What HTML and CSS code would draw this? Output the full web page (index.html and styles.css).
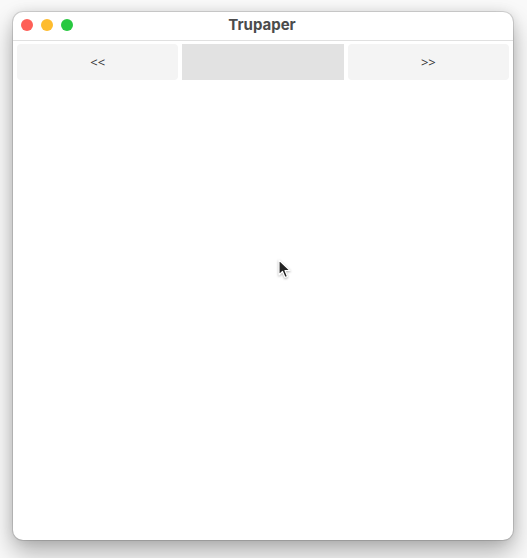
FILE: index.html
```html
<!DOCTYPE html>
<html>
<head>
<meta charset="utf-8">
<link rel="stylesheet" href="styles.css">
</head>
<body>
<div class="window">
  <div class="titlebar">
    <div class="lights">
      <span class="light red"></span>
      <span class="light yellow"></span>
      <span class="light green"></span>
    </div>
    <div class="title">Trupaper</div>
  </div>
  <div class="content">
    <div class="nav">
      <button class="btn">&lt;&lt;</button>
      <button class="btn active"></button>
      <button class="btn">&gt;&gt;</button>
    </div>
  </div>
  <svg class="cursor" width="14" height="20" viewBox="0 0 14 20">
    <path d="M1 1 L1 16 L4.5 12.5 L7 18.5 L9.5 17.5 L7 11.5 L12 11.5 Z" fill="#222" stroke="#fff" stroke-width="1.2" stroke-linejoin="round"/>
  </svg>
</div>
</body>
</html>
```
FILE: styles.css
```css
html, body {
  margin: 0;
  padding: 0;
  background: #f9f9f9;
  width: 527px;
  height: 558px;
  overflow: hidden;
}
body {
  padding: 12px 0 0 13px;
  box-sizing: border-box;
  font-family: Inter, "Liberation Sans", sans-serif;
}
.window {
  position: relative;
  width: 500px;
  height: 528px;
  background: #fff;
  border-radius: 10px;
  box-shadow: 0 0 0 1px rgba(0,0,0,0.12), 0 12px 24px rgba(0,0,0,0.3), 0 0 12px rgba(0,0,0,0.1);
  overflow: hidden;
}
.titlebar {
  position: relative;
  height: 28px;
  border-bottom: 1px solid #e0e0e0;
  display: flex;
  align-items: center;
  justify-content: center;
}
.lights {
  position: absolute;
  left: 8px;
  top: 7px;
  display: flex;
  gap: 8px;
}
.light {
  width: 12px;
  height: 12px;
  border-radius: 50%;
  display: block;
}
.red { background: #fe5f57; }
.yellow { background: #febc2e; }
.green { background: #28c840; }
.title {
  font-weight: 700;
  font-size: 15px;
  color: #4b4b4b;
  margin: 0 0 3px -2px;
}
.content {
  padding: 3px 4px;
}
.nav {
  display: grid;
  grid-template-columns: 1fr 1fr 1fr;
  gap: 4px;
}
.btn {
  height: 36px;
  border: none;
  background: #f4f4f4;
  border-radius: 4px;
  font-family: "Open Sans", "Liberation Sans", sans-serif;
  font-size: 13px;
  color: #333;
  padding: 0;
}
.btn.active {
  background: #e2e2e2;
  border-radius: 0;
}
.cursor {
  position: absolute;
  left: 265px;
  top: 247px;
  filter: drop-shadow(0 1px 1px rgba(0,0,0,0.3));
}
```
